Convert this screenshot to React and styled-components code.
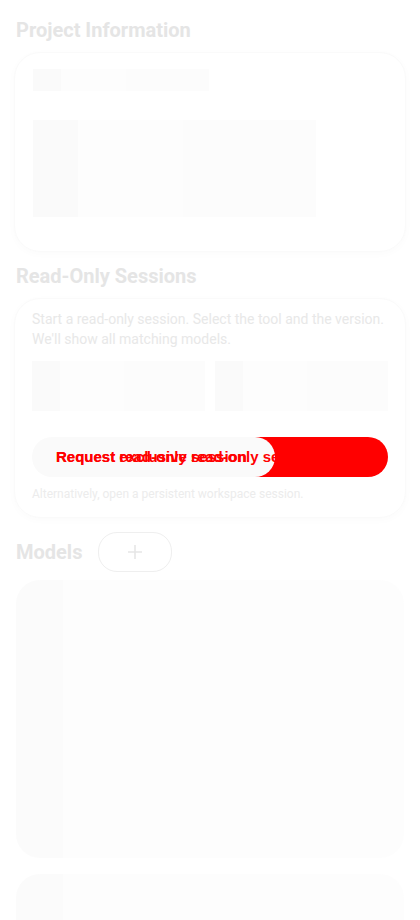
import React from "react";
import styled, { createGlobalStyle } from "styled-components";

const Global = createGlobalStyle`
  html, body {
    margin: 0;
    padding: 0;
    background: #ffffff;
    font-family: Roboto, "Noto Sans", sans-serif;
  }
`;

const App = () => {
  return (
    <Page>
      <Global />
      <SectionTitle>Project Information</SectionTitle>
      <Card>
        <Skeleton w="176px" h="22px" />
        <Skeleton w="283px" h="97px" top="29px" />
      </Card>

      <SectionTitle top="12px">Read-Only Sessions</SectionTitle>
      <Card pad="10px 17px 15px">
        <Lead>
          Start a read-only session. Select the tool and the version. We'll show
          all matching models.
        </Lead>
        <Selects>
          <Skeleton h="50px" />
          <Skeleton h="50px" />
        </Selects>
        <RequestButton>
          <Fade />
          <Label>Request read-only session</Label>
          <Label>Request exclusive read-only session</Label>
        </RequestButton>
        <Hint>Alternatively, open a persistent workspace session.</Hint>
      </Card>

      <ModelsHead>
        <SectionTitle as="span">Models</SectionTitle>
        <AddButton>
          <svg width="16" height="16" viewBox="0 0 16 16">
            <path d="M8 1v14M1 8h14" stroke="#e6e6e6" strokeWidth="1.6" />
          </svg>
        </AddButton>
      </ModelsHead>
      <ModelCard />
      <ModelCard />
    </Page>
  );
};

export default App;

const Page = styled.div`
  padding: 18px 14px 0;
  height: 920px;
  overflow: hidden;
  box-sizing: border-box;
`;

const SectionTitle = styled.h2`
  margin: ${(p) => p.top || "0"} 0 0 2px;
  font-size: 20px;
  line-height: 24px;
  font-weight: 700;
  color: #e5e5e5;
`;

const Card = styled.div`
  margin-top: 10px;
  padding: ${(p) => p.pad || "16px 18px 34px"};
  border-radius: 26px;
  border: 1px solid #fafafa;
  box-shadow: 0 2px 8px rgba(0, 0, 0, 0.02);
  display: flex;
  flex-direction: column;
`;

const Skeleton = styled.div`
  width: ${(p) => p.w || "auto"};
  height: ${(p) => p.h};
  margin-top: ${(p) => p.top || "0"};
  background: linear-gradient(
    90deg,
    #fafafa 0 16%,
    #fdfdfd 16% 53%,
    #fcfcfc 53% 100%
  );
`;

const Lead = styled.p`
  margin: 0;
  font-size: 14px;
  line-height: 20px;
  color: #e8e8e8;
`;

const Selects = styled.div`
  display: grid;
  grid-template-columns: 1fr 1fr;
  gap: 10px;
  margin-top: 12px;
`;

const RequestButton = styled.div`
  position: relative;
  margin-top: 26px;
  height: 40px;
  border-radius: 20px;
  background: linear-gradient(90deg, #ffffff 0 50%, #ff0000 50% 100%);
`;

const Fade = styled.div`
  position: absolute;
  left: 0;
  top: 0;
  bottom: 0;
  width: 243px;
  border-radius: 20px;
  background: #fafafa;
`;

const Label = styled.span`
  position: absolute;
  left: 24px;
  top: 11px;
  font-family: "Liberation Sans", Arial, sans-serif;
  font-weight: 700;
  font-size: 15px;
  line-height: 18px;
  color: #ff0000;
  white-space: nowrap;
  overflow: hidden;
  max-width: 300px;
`;

const Hint = styled.p`
  margin: 9px 0 0;
  font-size: 12px;
  line-height: 16px;
  color: #ececec;
`;

const ModelsHead = styled.div`
  display: flex;
  align-items: center;
  gap: 16px;
  margin-top: 14px;
`;

const AddButton = styled.div`
  width: 72px;
  height: 38px;
  border-radius: 19px;
  border: 1px solid #efefef;
  display: flex;
  align-items: center;
  justify-content: center;
`;

const ModelCard = styled.div`
  margin: 8px 2px 16px;
  height: 278px;
  border-radius: 24px;
  background: linear-gradient(90deg, #fbfbfb 0 12%, #fdfdfd 12% 100%);
`;
